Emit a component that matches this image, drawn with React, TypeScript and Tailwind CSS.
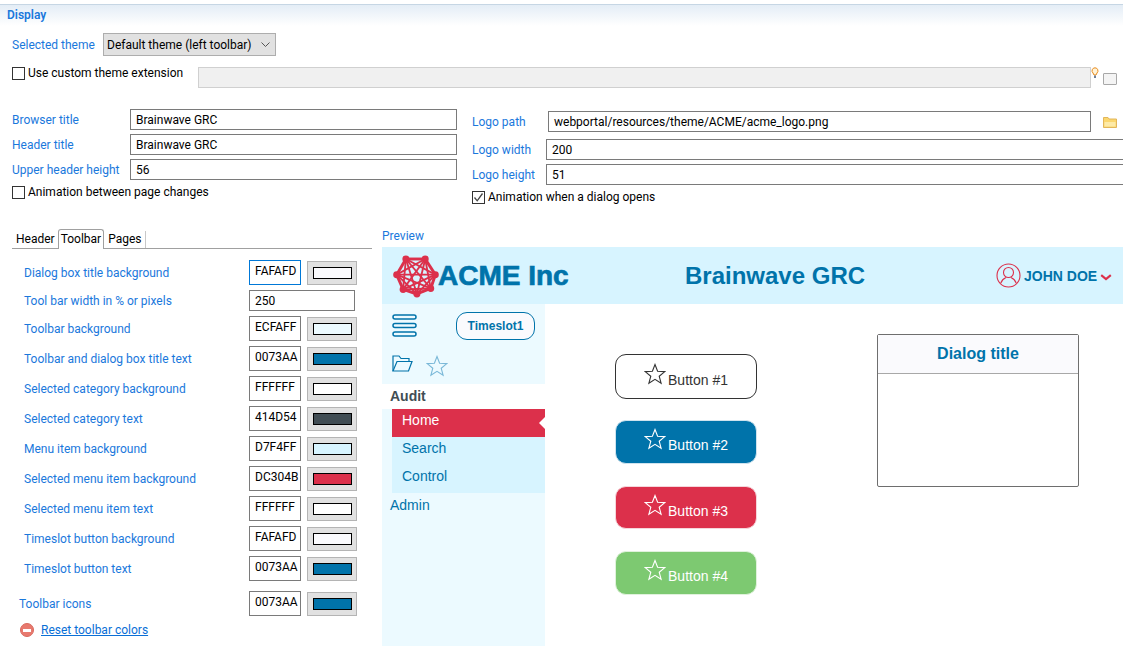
import React from "react";

const ui = "font-['Roboto','Noto_Sans',sans-serif]";

function Label({ children, className = "" }: { children: React.ReactNode; className?: string }) {
  return <span className={`whitespace-nowrap text-[12px] leading-[16px] text-[#1a78dc] ${className}`}>{children}</span>;
}

function Field({ value, className = "" }: { value: string; className?: string }) {
  return (
    <div className={`h-[21px] border border-[#7a7a7a] bg-white pl-[5px] text-[12px] leading-[21px] text-black ${className}`}>
      {value}
    </div>
  );
}

function Check({ label, checked, className = "" }: { label: string; checked?: boolean; className?: string }) {
  return (
    <div className={`flex items-center gap-[3px] whitespace-nowrap text-[12px] leading-[16px] text-black ${className}`}>
      <span className="flex h-[13px] w-[13px] items-center justify-center border border-[#333] bg-white">
        {checked && (
          <svg width="11" height="11" viewBox="0 0 11 11" fill="none">
            <path d="M1.5 5.5 L4.2 8.8 L9.5 1.5" stroke="#444" strokeWidth="1.3" />
          </svg>
        )}
      </span>
      {label}
    </div>
  );
}

function ColorRow({
  label,
  hex,
  color,
  focus,
  outdent,
  className = "",
}: {
  label: string;
  hex: string;
  color: string;
  focus?: boolean;
  outdent?: boolean;
  className?: string;
}) {
  return (
    <div className={`flex h-[25px] items-center ${className}`}>
      <Label className={outdent ? "ml-[7px] w-[230px]" : "ml-[12px] w-[225px]"}>{label}</Label>
      <div
        className={`h-[25px] w-[52px] border bg-white pl-[5px] pt-[1px] text-[12px] leading-[18px] text-black ${
          focus ? "border-[#0078d7]" : "border-[#7a7a7a]"
        }`}
      >
        {hex}
      </div>
      <div className="ml-[6px] flex h-[24px] w-[50px] items-center justify-center border border-[#b4b4b4] bg-[#e1e1e1]">
        <div className="h-[12px] w-[39px] border border-black" style={{ backgroundColor: color }} />
      </div>
    </div>
  );
}

const Star = ({ color, size = 22 }: { color: string; size?: number }) => (
  <svg width={size} height={size} viewBox="0 0 22 22" fill="none" className="shrink-0">
    <path
      d="M11 1.5 L13.6 8.2 L20.8 8.6 L15.2 13.2 L17.1 20.2 L11 16.3 L4.9 20.2 L6.8 13.2 L1.2 8.6 L8.4 8.2 Z"
      stroke={color}
      strokeWidth="1.1"
      strokeLinejoin="miter"
    />
  </svg>
);

function PreviewButton({ n, className }: { n: number; className: string }) {
  const dark = n === 1;
  return (
    <div className={`flex w-[142px] items-center justify-center rounded-[11px] border ${className}`}>
      <div className="mr-[2px] -mt-[6px]">
        <Star color={dark ? "#333333" : "#ffffff"} />
      </div>
      <span className="mt-[6px] text-[14px] leading-[16px]">Button #{n}</span>
    </div>
  );
}

function Logo() {
  const nodes: [number, number][] = [
    [14, 4],
    [35, 4],
    [46, 21],
    [41, 36],
    [26, 42],
    [11, 37],
    [4, 21],
  ];
  const lines: React.ReactNode[] = [];
  for (let i = 0; i < nodes.length; i++) {
    for (let j = i + 1; j < nodes.length; j++) {
      const adjacent = j === i + 1 || (i === 0 && j === nodes.length - 1);
      lines.push(
        <line
          key={`${i}-${j}`}
          x1={nodes[i][0]}
          y1={nodes[i][1]}
          x2={nodes[j][0]}
          y2={nodes[j][1]}
          stroke="#dc304b"
          strokeWidth={adjacent ? 3.2 : 2}
        />,
      );
    }
  }
  return (
    <svg width="46" height="43" viewBox="0 0 50 46" className="shrink-0">
      {lines}
      {nodes.map(([x, y], i) => (
        <circle key={i} cx={x} cy={y} r="3.8" fill="#dc304b" />
      ))}
    </svg>
  );
}

export default function App() {
  return (
    <div className={`${ui} h-[659px] w-[1123px] overflow-hidden bg-white pt-[4px]`}>
      {/* Section header */}
      <div className="h-[22px] border-t border-[#c6d6e4] bg-gradient-to-b from-[#e4edf6] to-white pl-[7px] text-[12px] font-semibold leading-[20px] text-[#1a78dc]">
        Display
      </div>

      {/* Theme */}
      <div className="mt-[7px] flex h-[23px] items-center pl-[12px]">
        <Label className="w-[91px]">Selected theme</Label>
        <div className="flex h-[23px] w-[173px] items-center justify-between whitespace-nowrap border border-[#adadad] bg-[#e1e1e1] pl-[3px] pr-[5px] text-[12px] text-black">
          Default theme (left toolbar)
          <svg width="9" height="6" viewBox="0 0 9 6" fill="none">
            <path d="M0.5 0.5 L4.5 4.5 L8.5 0.5" stroke="#555" />
          </svg>
        </div>
      </div>

      {/* Custom theme */}
      <div className="mt-[8px] flex h-[24px] pl-[12px]">
        <Check label="Use custom theme extension" className="mt-[1px] h-[16px] w-[186px]" />
        <div className="mt-[3px] h-[21px] w-[893px] border border-[#d0d0d0] bg-[#f0f0f0]" />
        <svg width="8" height="12" viewBox="0 0 8 12" className="mt-[3px] shrink-0">
          <path d="M4 0.8 A3 3 0 0 1 6 6 L5 8 H3 L2 6 A3 3 0 0 1 4 0.8 Z" fill="#fff3d8" stroke="#e88a1a" />
          <rect x="3" y="8.5" width="2" height="2.5" fill="#6f7f99" />
        </svg>
        <div className="ml-[4px] mt-[9px] h-[12px] w-[14px] rounded-[1px] border border-[#a8a8a8] bg-[#f4f4f4]" />
      </div>

      {/* Two columns */}
      <div className="mt-[21px] flex">
        <div className="ml-[12px] flex w-[445px] flex-col">
          <div className="flex h-[25px] items-start">
            <Label className="mt-[3px] w-[118px]">Browser title</Label>
            <Field value="Brainwave GRC" className="flex-1" />
          </div>
          <div className="flex h-[25px] items-start">
            <Label className="mt-[3px] w-[118px]">Header title</Label>
            <Field value="Brainwave GRC" className="flex-1" />
          </div>
          <div className="flex h-[25px] items-start">
            <Label className="mt-[3px] w-[118px]">Upper header height</Label>
            <Field value="56" className="flex-1" />
          </div>
          <Check label="Animation between page changes" />
        </div>
        <div className="ml-[15px] mt-[2px] flex flex-1 flex-col">
          <div className="flex h-[28px] items-start">
            <Label className="mt-[3px] w-[76px]">Logo path</Label>
            <Field value="webportal/resources/theme/ACME/acme_logo.png" className="w-[543px]" />
            <svg width="14" height="12" viewBox="0 0 14 12" className="ml-[12px] mt-[5px]">
              <path d="M0.5 1.5 H5 L6 3 H13.5 V11.5 H0.5 Z" fill="#fbd76f" stroke="#e2b65a" />
              <path d="M1.5 6 H12.5 V10.5 H1.5 Z" fill="#fdeaa8" />
            </svg>
          </div>
          <div className="flex h-[25px] items-start">
            <Label className="mt-[3px] w-[74px]">Logo width</Label>
            <Field value="200" className="-mr-[10px] flex-1" />
          </div>
          <div className="flex h-[25px] items-start">
            <Label className="mt-[3px] w-[74px]">Logo height</Label>
            <Field value="51" className="-mr-[10px] flex-1" />
          </div>
          <Check label="Animation when a dialog opens" checked />
        </div>
      </div>

      {/* Lower area */}
      <div className="mt-[24px] flex">
        {/* Left settings */}
        <div className="ml-[12px] w-[360px]">
          <div className="flex h-[20px] items-end border-b border-[#a0a0a0] pl-[2px] text-[12px] leading-[16px] text-black">
            <span className="px-[2px] pb-[1px]">Header</span>
            <span className="-mb-[1px] ml-[1px] rounded-t-[3px] border border-b-0 border-[#a0a0a0] bg-white px-[2px] pb-[2px] pt-[1px]">
              Toolbar
            </span>
            <span className="border-r border-[#c8c8c8] pb-[1px] pl-[4px] pr-[3px]">Pages</span>
          </div>
          <div className="mt-[11px] flex flex-col gap-[5px]">
            <ColorRow label="Dialog box title background" hex="FAFAFD" color="#FAFAFD" focus />
            <div className="flex h-[21px] items-center">
              <Label className="ml-[12px] w-[225px]">Tool bar width in % or pixels</Label>
              <Field value="250" className="w-[106px]" />
            </div>
            <ColorRow label="Toolbar background" hex="ECFAFF" color="#ECFAFF" />
            <ColorRow label="Toolbar and dialog box title text" hex="0073AA" color="#0073AA" />
            <ColorRow label="Selected category background" hex="FFFFFF" color="#FFFFFF" />
            <ColorRow label="Selected category text" hex="414D54" color="#414D54" />
            <ColorRow label="Menu item background" hex="D7F4FF" color="#D7F4FF" />
            <ColorRow label="Selected menu item background" hex="DC304B" color="#DC304B" />
            <ColorRow label="Selected menu item text" hex="FFFFFF" color="#FFFFFF" />
            <ColorRow label="Timeslot button background" hex="FAFAFD" color="#FAFAFD" />
            <ColorRow label="Timeslot button text" hex="0073AA" color="#0073AA" />
            <ColorRow label="Toolbar icons" hex="0073AA" color="#0073AA" outdent className="mt-[5px]" />
          </div>
          <div className="mt-[6px] flex items-center pl-[8px] text-[12px] leading-[16px]">
            <span className="flex h-[14px] w-[14px] items-center justify-center rounded-full border border-[#d9695e] bg-[#e8796e]">
              <span className="h-[3px] w-[8px] bg-white" />
            </span>
            <span className="ml-[7px] text-[#0a6fd6] underline">Reset toolbar colors</span>
          </div>
        </div>

        {/* Preview */}
        <div className="ml-[10px] flex-1 -mt-[1px]">
          <Label className="block">Preview</Label>
          <div className="mt-[3px] font-['Liberation_Sans',Arial,sans-serif]">
            <div className="flex h-[57px] items-center bg-[#D7F4FF] text-[#0073AA]">
              <div className="ml-[11px] mt-[1px]">
                <Logo />
              </div>
              <span className="-ml-[1px] w-[247px] whitespace-nowrap text-[28px] font-bold leading-[32px] [-webkit-text-stroke:0.7px_#0073AA]">
                ACME Inc
              </span>
              <span className="w-[178px] whitespace-nowrap text-[24px] font-bold leading-[28px]">Brainwave GRC</span>
              <div className="ml-[133px] flex items-center">
                <svg width="25" height="25" viewBox="0 0 25 25" fill="none" stroke="#dc304b" strokeWidth="1.1">
                  <circle cx="12.5" cy="12.5" r="11.5" />
                  <circle cx="12.5" cy="9.5" r="5" />
                  <path d="M4.8 20 C6 16 9 15 10 14.5 M20.2 20 C19 16 16 15 15 14.5" />
                </svg>
                <span className="ml-[3px] whitespace-nowrap text-[14px] font-bold leading-[16px]">JOHN DOE</span>
                <svg width="12" height="7" viewBox="0 0 12 7" fill="none" className="ml-[3px] mt-[3px]">
                  <path d="M1.2 1.2 L6 5 L10.8 1.2" stroke="#dc304b" strokeWidth="2.2" />
                </svg>
              </div>
            </div>
            <div className="flex h-[342px]">
              {/* Sidebar */}
              <div className="w-[163px] bg-[#ECFAFF] text-[#0073AA]">
                <div className="h-[80px] pl-[10px]">
                  <div className="flex h-[44px] items-start">
                    <svg width="25" height="24" viewBox="0 0 25 24" fill="none" stroke="#0073AA" strokeWidth="1.5" className="mt-[10px]">
                      <rect x="1" y="1" width="23" height="4" rx="2" />
                      <rect x="1" y="9.5" width="23" height="4" rx="2" />
                      <rect x="1" y="18" width="23" height="4" rx="2" />
                    </svg>
                    <div className="ml-[39px] mt-[8px] flex h-[28px] w-[79px] items-center justify-center rounded-[11px] border border-[#0073AA] bg-[#FAFAFD] text-[12px] font-bold">
                      Timeslot1
                    </div>
                  </div>
                  <div className="flex items-start">
                    <svg width="21" height="18" viewBox="0 0 21 18" fill="none" stroke="#0073AA" strokeWidth="1.2" className="mt-[7px]">
                      <path d="M1 16 V1 H7 L9 3.5 H17 V6.5" />
                      <path d="M1 16 L5 6.5 H20 L16.5 16 Z" fill="#ecfaff" />
                    </svg>
                    <div className="ml-[13px] mt-[7px]">
                      <Star color="#7ab8d8" />
                    </div>
                  </div>
                </div>
                <div className="h-[25px] bg-white pl-[8px] text-[14px] font-bold leading-[25px] text-[#414D54]">Audit</div>
                <div className="ml-[10px] bg-[#D7F4FF] text-[14px]">
                  <div className="relative h-[28px] bg-[#DC304B] pl-[10px] leading-[22px] text-white">
                    Home
                    <span className="absolute right-0 top-[8px] h-0 w-0 border-y-[6px] border-r-[6px] border-y-transparent border-r-white" />
                  </div>
                  <div className="h-[28px] pl-[10px] leading-[22px]">Search</div>
                  <div className="h-[28px] pl-[10px] leading-[22px]">Control</div>
                </div>
                <div className="mt-[3px] pl-[8px] text-[14px] leading-[18px]">Admin</div>
              </div>
              {/* Main */}
              <div className="flex flex-1 items-start">
                <div className="ml-[70px] mt-[50px] flex flex-col gap-[21px]">
                  <PreviewButton n={1} className="h-[45px] border-[#333] bg-white text-[#333]" />
                  <PreviewButton n={2} className="h-[44px] border-[#cfe3ee] bg-[#0073AA] text-white" />
                  <PreviewButton n={3} className="mt-[1px] h-[43px] border-[#f5d6db] bg-[#DC304B] text-white" />
                  <PreviewButton n={4} className="mt-[1px] h-[44px] border-[#e0f2dc] bg-[#7DC971] text-white" />
                </div>
                <div className="ml-[120px] mt-[30px] h-[153px] w-[202px] rounded-[2px] border border-[#6e6e6e] bg-white">
                  <div className="flex h-[39px] items-center justify-center border-b border-[#a8a8a8] bg-[#FAFAFD] text-[16px] font-bold text-[#0073AA]">
                    Dialog title
                  </div>
                </div>
              </div>
            </div>
          </div>
        </div>
      </div>
    </div>
  );
}
